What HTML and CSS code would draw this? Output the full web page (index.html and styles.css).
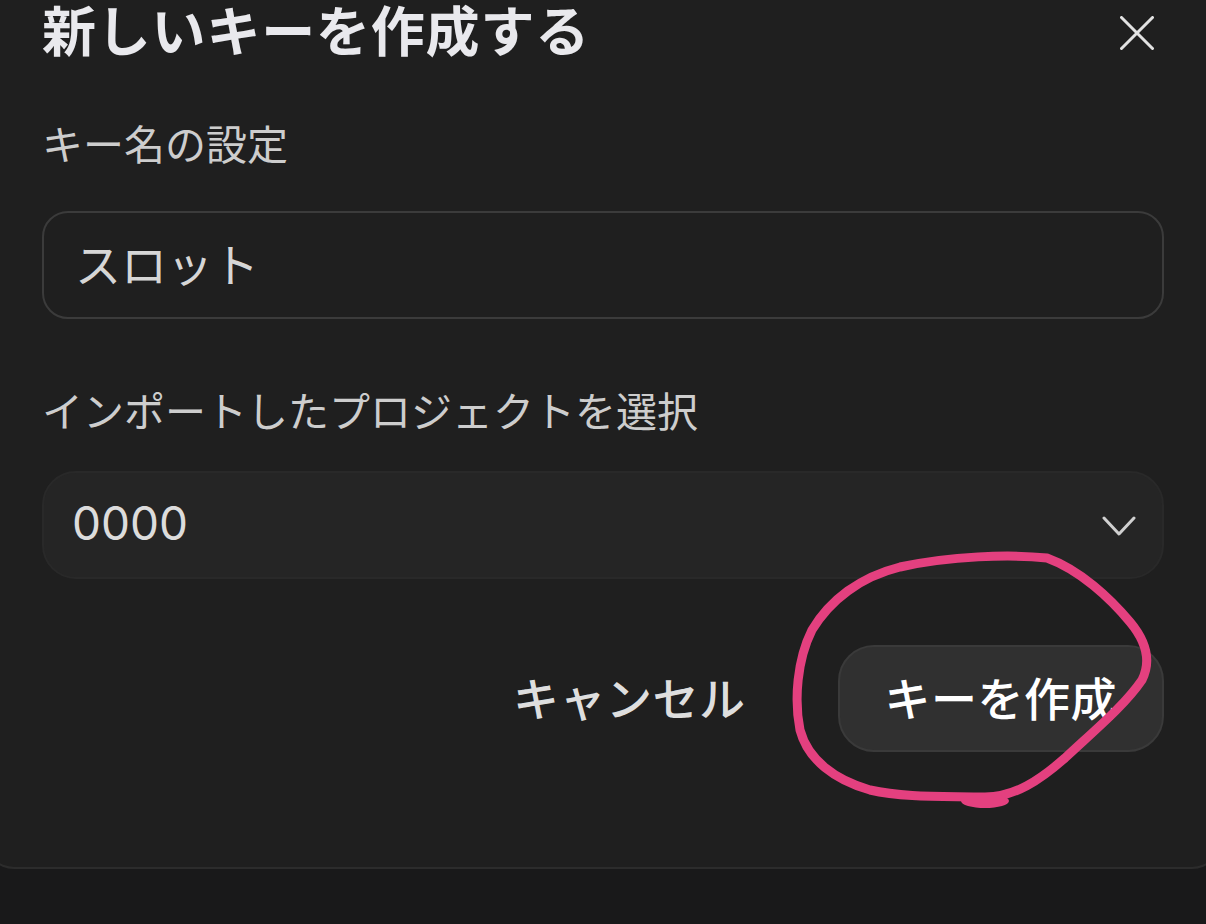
FILE: index.html
```html
<!DOCTYPE html>
<html lang="ja">
<head>
<meta charset="utf-8">
<title>新しいキーを作成する</title>
<link rel="stylesheet" href="styles.css">
</head>
<body>
<div class="modal">
  <div class="header">
    <h2 class="title">新しいキーを作成する</h2>
    <button class="close" aria-label="閉じる">
      <svg width="34" height="34" viewBox="0 0 34 34"><path d="M1.5 1.5 L32.5 32.5 M32.5 1.5 L1.5 32.5" stroke="#e2e2e2" stroke-width="3" stroke-linecap="round" fill="none"/></svg>
    </button>
  </div>
  <div class="field field-name">
    <div class="label">キー名の設定</div>
    <div class="input">スロット</div>
  </div>
  <div class="field field-project">
    <div class="label">インポートしたプロジェクトを選択</div>
    <div class="select">
      <span class="select-value">0000</span>
      <svg class="chevron" width="34" height="22" viewBox="0 0 34 22"><path d="M2 3 L17 19 L32 3" stroke="#d0d0d0" stroke-width="3" stroke-linecap="round" stroke-linejoin="round" fill="none"/></svg>
    </div>
  </div>
  <div class="actions">
    <button class="cancel">キャンセル</button>
    <button class="primary">キーを作成</button>
  </div>
</div>
<svg class="annotation" width="1206" height="924" viewBox="0 0 1206 924">
  <path d="M1047,558 C1010,554 950,556 900,567 C860,577 830,600 812,630 C797,660 794,700 800,730 C808,760 835,780 870,790 C905,798 945,796 985,797 C1015,797 1040,780 1065,758 C1095,730 1125,705 1142,680 C1152,660 1145,640 1130,622 C1110,598 1080,570 1047,558 Z" stroke="#e4407f" stroke-width="9" fill="none" stroke-linecap="round" stroke-linejoin="round"/>
  <ellipse cx="985" cy="801" rx="24" ry="7" fill="#e4407f"/>
</svg>
</body>
</html>
```
FILE: styles.css
```css
* { box-sizing: border-box; }
html, body { margin: 0; padding: 0; }
body {
  background: #19191a;
  width: 1206px;
  height: 924px;
  overflow: hidden;
  position: relative;
  font-family: "Noto Sans CJK JP", "Noto Sans", sans-serif;
}
.modal {
  background: #1f1f1f;
  border: 2px solid #2c2c2c;
  border-top: none;
  border-radius: 0 0 30px 30px;
  margin: 0 -16px;
  padding: 0 56px 115px 56px;
  width: 1238px;
}
.header {
  display: flex;
  justify-content: space-between;
  align-items: flex-start;
}
.title {
  margin: 0;
  padding-top: 3px;
  font-size: 54px;
  line-height: 52px;
  font-weight: 700;
  color: #e9e9ed;
  letter-spacing: 0.8px;
}
.close {
  background: none;
  border: none;
  padding: 0;
  margin: 16px 10px 0 0;
  display: flex;
  cursor: pointer;
}
.field { display: flex; flex-direction: column; }
.label {
  font-size: 41px;
  line-height: 56px;
  color: #cdcdcd;
}
.field-name { margin-top: 59px; }
.field-project { margin-top: 62px; }
.input {
  margin-top: 41px;
  height: 108px;
  border: 2px solid #3b3b3b;
  border-radius: 26px;
  background: #1f1f1f;
  display: flex;
  align-items: center;
  padding: 0 0 6px 31px;
  font-size: 46px;
  color: #d6d6d6;
}
.select {
  margin-top: 34px;
  height: 108px;
  border: 2px solid #292929;
  border-radius: 34px;
  background: #252525;
  display: flex;
  align-items: center;
  justify-content: space-between;
  padding: 0 26px 0 28px;
}
.select-value {
  font-family: Inter, "Noto Sans", sans-serif;
  font-size: 46px;
  line-height: 60px;
  color: #dcdcdc;
  padding-bottom: 4px;
}
.chevron { margin-top: 2px; }
.actions {
  margin-top: 66px;
  display: flex;
  justify-content: flex-end;
  align-items: center;
  gap: 92px;
}
.cancel {
  background: none;
  border: none;
  padding: 0 0 6px 0;
  font-family: inherit;
  font-size: 46px;
  font-weight: 500;
  letter-spacing: 0.5px;
  color: #dedede;
}
.primary {
  height: 107px;
  padding: 0 45px 6px 45px;
  border: 2px solid #3a3a3a;
  border-radius: 36px;
  background: #303030;
  font-family: inherit;
  font-size: 46px;
  font-weight: 500;
  letter-spacing: 0.5px;
  color: #ffffff;
}
.annotation {
  position: absolute;
  left: 0;
  top: 0;
  pointer-events: none;
}
```
